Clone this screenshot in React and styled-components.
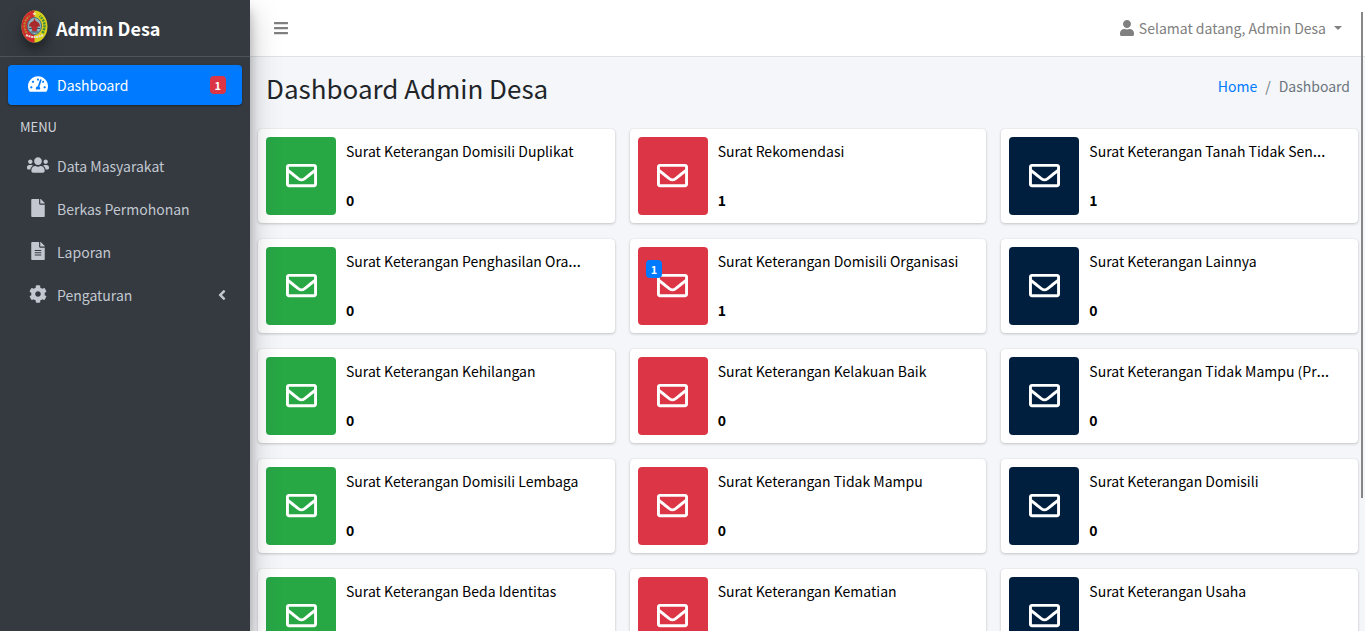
import React from "react";
import styled, { createGlobalStyle } from "styled-components";
import {
  FaTachometerAlt,
  FaUsers,
  FaFile,
  FaFileAlt,
  FaCog,
  FaAngleLeft,
  FaBars,
  FaUser,
  FaRegEnvelope,
} from "react-icons/fa";

const GlobalStyle = createGlobalStyle`
  *, *::before, *::after { box-sizing: border-box; }
  body {
    margin: 0;
    overflow: hidden;
    background: #f4f6f9;
    color: #212529;
    font-family: "Source Sans Pro", "Noto Sans CJK JP", "Noto Sans", sans-serif;
    font-size: 14px;
    line-height: 24px;
  }
  a { color: #007bff; text-decoration: none; }
  h1, h2, p, ul, ol { margin: 0; padding: 0; }
  ul, ol { list-style: none; }
  button { font: inherit; color: inherit; background: none; border: 0; padding: 0; cursor: pointer; }
`;

const Shell = styled.div`
  display: flex;
  height: 100vh;
  overflow: hidden;
`;

const Sidebar = styled.aside`
  position: relative;
  z-index: 2;
  flex: 0 0 250px;
  background: #343a40;
  color: #c2c7d0;
  box-shadow: 0 14px 28px rgba(0, 0, 0, 0.25), 0 10px 10px rgba(0, 0, 0, 0.22);
`;

const Brand = styled.a`
  display: flex;
  align-items: center;
  gap: 8px;
  height: 57px;
  padding: 0 21px;
  border-bottom: 1px solid #4b545c;
  color: #fff;
  font-size: 18px;
  font-weight: 700;
`;

const BrandLogo = styled.svg`
  width: 27px;
  height: 33px;
  margin-bottom: 4px;
  border-radius: 50%;
  box-shadow: 0 10px 20px rgba(0, 0, 0, 0.19), 0 6px 6px rgba(0, 0, 0, 0.23);
`;

const Nav = styled.nav`
  padding: 8px;
`;

const NavList = styled.ul`
  display: flex;
  flex-direction: column;
  gap: 3px;
`;

const NavLink = styled.a`
  display: flex;
  align-items: center;
  height: 40px;
  padding: 0 16px;
  border-radius: 4px;
  color: ${(p) => (p.$active ? "#fff" : "#c2c7d0")};
  background: ${(p) => (p.$active ? "#007bff" : "transparent")};
  box-shadow: ${(p) =>
    p.$active ? "0 1px 3px rgba(0,0,0,.12), 0 1px 2px rgba(0,0,0,.24)" : "none"};
`;

const NavIcon = styled.span`
  display: flex;
  justify-content: center;
  width: 28px;
  margin: 0 5px 2px 0;
  font-size: ${(p) => p.$size || 18}px;
`;

const NavLabel = styled.span`
  flex: 1;
`;

const NavArrow = styled(FaAngleLeft)`
  width: 8px;
  height: 16px;
`;

const NavHeader = styled.li`
  padding: 7px 12px 4px;
  font-size: 13px;
  color: #d0d4db;
`;

const Badge = styled.span`
  display: inline-block;
  min-width: 16px;
  padding: 0 5px;
  border-radius: 4px;
  background: ${(p) => p.$color};
  color: #fff;
  font-size: 11px;
  font-weight: 700;
  line-height: 18px;
  text-align: center;
`;

const Main = styled.div`
  flex: 1;
  min-width: 0;
`;

const Topbar = styled.header`
  display: flex;
  align-items: center;
  justify-content: space-between;
  height: 57px;
  padding: 0 23px;
  background: #fff;
  border-bottom: 1px solid #dee2e6;
  color: #808080;
`;

const MenuButton = styled.button`
  display: flex;
  font-size: 16px;
`;

const UserButton = styled.button`
  display: flex;
  align-items: center;
  gap: 4px;
`;

const UserIcon = styled(FaUser)`
  font-size: 16px;
`;

const Caret = styled.span`
  margin-left: 4px;
  border-top: 4px solid;
  border-left: 4px solid transparent;
  border-right: 4px solid transparent;
`;

const PageHead = styled.div`
  display: flex;
  justify-content: space-between;
  padding: 14px 15px 25px 16px;
`;

const PageTitle = styled.h1`
  font-size: 26px;
  font-weight: 400;
  line-height: 33px;
`;

const Crumbs = styled.ol`
  display: flex;
  gap: 8px;
  padding-top: 3px;
  color: #6c757d;
`;

const CardGrid = styled.section`
  display: grid;
  grid-template-columns: repeat(3, minmax(0, 1fr));
  gap: 16px 15px;
  padding: 0 7px 0 8px;
`;

const Card = styled.a`
  display: flex;
  padding: 8px;
  border-radius: 4px;
  background: #fff;
  color: #000;
  box-shadow: 0 0 1px rgba(0, 0, 0, 0.13), 0 1px 3px rgba(0, 0, 0, 0.2);
`;

const CardIcon = styled.span`
  position: relative;
  display: flex;
  flex: 0 0 70px;
  align-items: center;
  justify-content: center;
  padding-bottom: 1px;
  border-radius: 4px;
  background: ${(p) => p.$color};
  color: #fff;
  font-size: 31px;
`;

const CardBadge = styled(Badge)`
  position: absolute;
  top: 13px;
  left: 8px;
`;

const CardBody = styled.span`
  display: flex;
  flex: 1;
  flex-direction: column;
  justify-content: space-between;
  min-width: 0;
  height: 78px;
  padding: 2px 10px 3px;
`;

const CardTitle = styled.span`
  overflow: hidden;
  white-space: nowrap;
`;

const Ellipsis = styled.span`
  font-family: "Noto Sans", sans-serif;
  font-size: 16px;
  line-height: 16px;
`;

const CardCount = styled.span`
  font-weight: 700;
`;

const ScrollThumb = styled.div`
  position: fixed;
  z-index: 3;
  top: 12px;
  right: 2px;
  width: 2px;
  height: 77vh;
  background: #868686;
`;

const menu = [
  { label: "Data Masyarakat", icon: FaUsers, size: 22 },
  { label: "Berkas Permohonan", icon: FaFile },
  { label: "Laporan", icon: FaFileAlt },
  { label: "Pengaturan", icon: FaCog, expandable: true },
];

const colors = ["#28a745", "#dc3545", "#001f3f"];

const letters = [
  { title: "Surat Keterangan Domisili Duplikat", count: 0 },
  { title: "Surat Rekomendasi", count: 1 },
  { title: "Surat Keterangan Tanah Tidak Sen", shortened: true, count: 1 },
  { title: "Surat Keterangan Penghasilan Ora", shortened: true, count: 0 },
  { title: "Surat Keterangan Domisili Organisasi", count: 1, fresh: 1 },
  { title: "Surat Keterangan Lainnya", count: 0 },
  { title: "Surat Keterangan Kehilangan", count: 0 },
  { title: "Surat Keterangan Kelakuan Baik", count: 0 },
  { title: "Surat Keterangan Tidak Mampu (Pr", shortened: true, count: 0 },
  { title: "Surat Keterangan Domisili Lembaga", count: 0 },
  { title: "Surat Keterangan Tidak Mampu", count: 0 },
  { title: "Surat Keterangan Domisili", count: 0 },
  { title: "Surat Keterangan Beda Identitas", count: 0 },
  { title: "Surat Keterangan Kematian", count: 0 },
  { title: "Surat Keterangan Usaha", count: 0 },
];

function Logo() {
  return (
    <BrandLogo viewBox="0 0 27 33" aria-hidden="true">
      <ellipse cx="13.5" cy="16.5" rx="13" ry="16" fill="#d8cf1c" />
      <path d="M13.5 .5a13 16 0 0 0 0 32z" fill="#cf2a30" />
      <path d="M5.500 23C2 17 3 10 8.500 6" fill="none" stroke="#b08a2a" strokeWidth="2" strokeDasharray="2 1" />
      <path d="M21.500 23c3.500-6 2.500-13-3-17" fill="none" stroke="#3d8a3c" strokeWidth="2.500" strokeDasharray="2 1" />
      <ellipse cx="13.5" cy="16" rx="7" ry="8.500" fill="#8fb4c0" stroke="#4b6f76" />
      <path d="M13.500 8l1.200 3c3 1 4.300 3 4.300 5.500h-11c0-2.500 1.300-4.500 4.300-5.500z" fill="#a82a2c" />
      <path d="M10 16h7l-1.500 5.500h-4z" fill="#b02c2e" />
      <path d="M8 18.500h3M16 18.500h3M9.500 22h8" stroke="#36596b" strokeWidth="1" />
      <path d="M5 25q8.500 4 17 0" fill="none" stroke="#e6ddd0" strokeWidth="2" strokeDasharray="2 .6" />
      <path d="M13.500 1.500l.6 1.500 1.500.1-1.200 1 .4 1.500-1.300-.9-1.300.9.4-1.500-1.200-1 1.500-.1z" fill="#f3e9b0" />
    </BrandLogo>
  );
}

function LetterCard({ letter, color }) {
  return (
    <Card href="#surat">
      <CardIcon $color={color}>
        <FaRegEnvelope />
        {letter.fresh && <CardBadge $color="#007bff">{letter.fresh}</CardBadge>}
      </CardIcon>
      <CardBody>
        <CardTitle>
          {letter.title}
          {letter.shortened && <Ellipsis>…</Ellipsis>}
        </CardTitle>
        <CardCount>{letter.count}</CardCount>
      </CardBody>
    </Card>
  );
}

export default function App() {
  return (
    <>
      <GlobalStyle />
      <Shell>
        <Sidebar>
          <Brand href="#beranda">
            <Logo />
            <span>Admin Desa</span>
          </Brand>
          <Nav>
            <NavList>
              <li>
                <NavLink href="#dashboard" $active>
                  <NavIcon $size={20}>
                    <FaTachometerAlt />
                  </NavIcon>
                  <NavLabel>Dashboard</NavLabel>
                  <Badge $color="#dc3545">1</Badge>
                </NavLink>
              </li>
              <NavHeader>MENU</NavHeader>
              {menu.map(({ label, icon: Icon, size, expandable }) => (
                <li key={label}>
                  <NavLink href="#menu">
                    <NavIcon $size={size}>
                      <Icon />
                    </NavIcon>
                    <NavLabel>{label}</NavLabel>
                    {expandable && <NavArrow />}
                  </NavLink>
                </li>
              ))}
            </NavList>
          </Nav>
        </Sidebar>
        <Main>
          <Topbar>
            <MenuButton type="button" aria-label="Menu">
              <FaBars />
            </MenuButton>
            <UserButton type="button">
              <UserIcon />
              Selamat datang, Admin Desa
              <Caret />
            </UserButton>
          </Topbar>
          <PageHead>
            <PageTitle>Dashboard Admin Desa</PageTitle>
            <Crumbs>
              <li>
                <a href="#home">Home</a>
              </li>
              <li>/</li>
              <li>Dashboard</li>
            </Crumbs>
          </PageHead>
          <CardGrid>
            {letters.map((letter, i) => (
              <LetterCard key={letter.title} letter={letter} color={colors[i % 3]} />
            ))}
          </CardGrid>
        </Main>
      </Shell>
      <ScrollThumb />
    </>
  );
}
